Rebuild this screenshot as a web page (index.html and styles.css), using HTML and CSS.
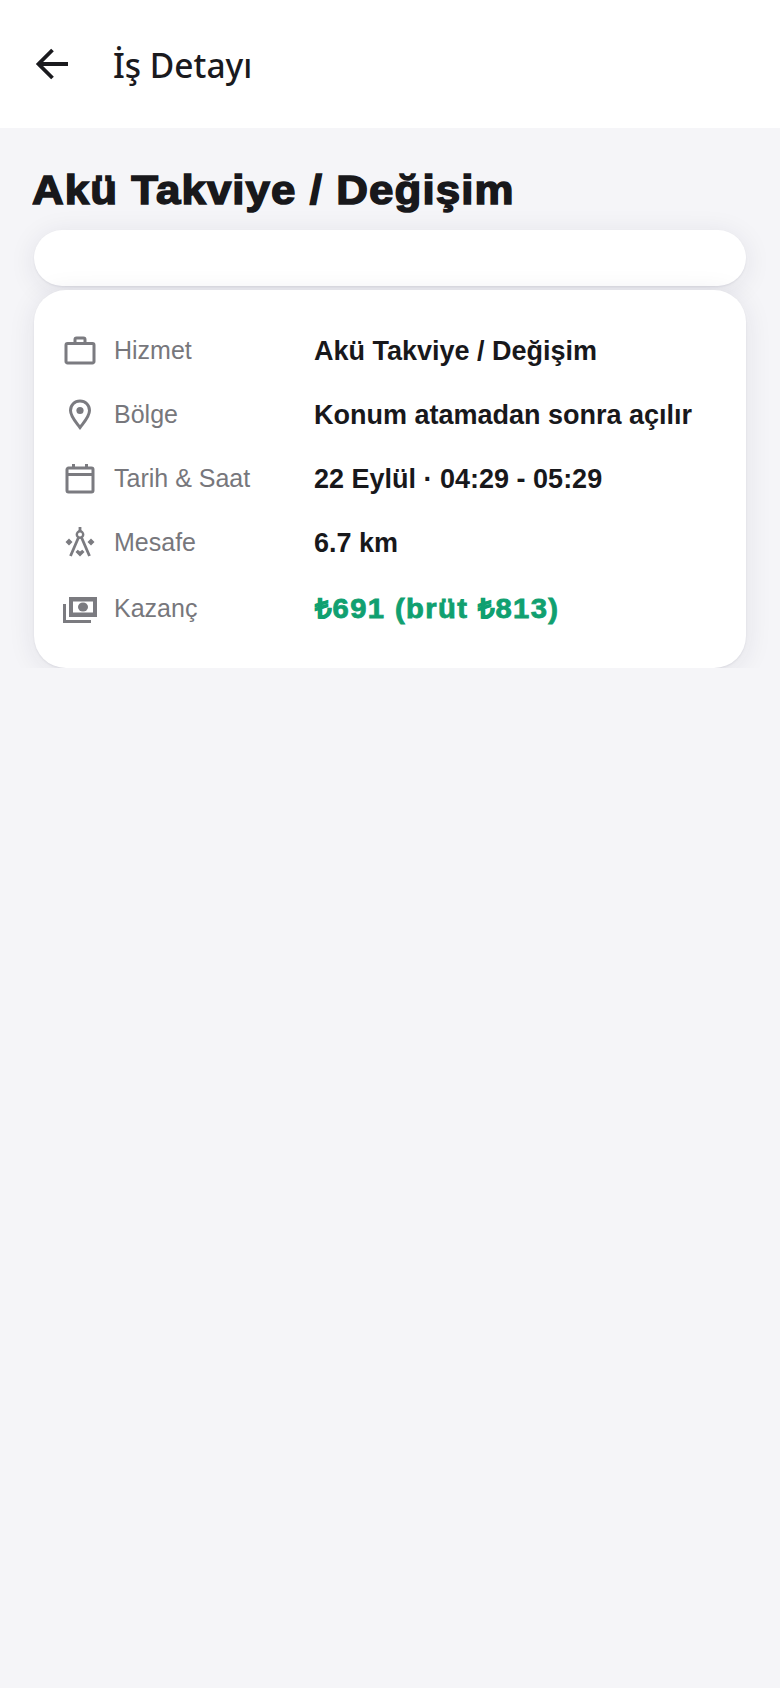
FILE: index.html
```html
<!DOCTYPE html>
<html>
<head>
    <meta charset="utf-8" />
    <title>İş Detayı</title>
    <link rel="stylesheet" href="styles.css">
</head>
<body>
    <header class="topbar">
        <svg class="back" width="36" height="32" viewBox="0 0 36 32"><path d="M33 16H3.500M17.500 2 3.500 16l14 14" fill="none" stroke="#1a1a1e" stroke-width="3.800"/></svg>
        <div class="topbar-title">İş Detayı</div>
    </header>

    <main class="content">
        <h1 class="job-title">Akü Takviye / Değişim</h1>
        <div class="card card-empty"></div>
        <div class="card card-info">
            <div class="row">
                <svg class="icon" viewBox="0 0 32 32"><path d="M3.500 8.500h25a1.500 1.500 0 0 1 1.500 1.500v16.500a1.500 1.500 0 0 1-1.500 1.500h-25A1.500 1.500 0 0 1 2 26.500V10a1.500 1.500 0 0 1 1.500-1.500ZM11 8.500V4.500A1.500 1.500 0 0 1 12.500 3h7A1.500 1.500 0 0 1 21 4.500v4" fill="none" stroke="#7b7b80" stroke-width="3"/></svg>
                <span class="label">Hizmet</span>
                <span class="value">Akü Takviye / Değişim</span>
            </div>
            <div class="row">
                <svg class="icon" viewBox="0 0 32 32"><path d="M16 2C10.500 2 6.500 6.200 6.500 11.500c0 6 5 11 9.500 17 4.500-6 9.500-11 9.500-17C25.500 6.200 21.500 2 16 2Z" fill="none" stroke="#7b7b80" stroke-width="3"/><circle cx="16" cy="11.500" r="3.600" fill="#7b7b80"/></svg>
                <span class="label">Bölge</span>
                <span class="value">Konum atamadan sonra açılır</span>
            </div>
            <div class="row">
                <svg class="icon" viewBox="0 0 32 32"><path d="M4.500 5h23A1.500 1.500 0 0 1 29 6.500v21a1.500 1.500 0 0 1-1.500 1.500h-23A1.500 1.500 0 0 1 3 27.500v-21A1.500 1.500 0 0 1 4.500 5ZM3 11.500h26M9.500 1v5M22.500 1v5" fill="none" stroke="#7b7b80" stroke-width="3"/></svg>
                <span class="label">Tarih &amp; Saat</span>
                <span class="value">22 Eylül · 04:29 - 05:29</span>
            </div>
            <div class="row">
                <svg class="icon" viewBox="0 0 32 32"><circle cx="16" cy="7.500" r="3.200" fill="none" stroke="#7b7b80" stroke-width="2.400"/><path d="M16 0v4.500M14.500 10.500 6.500 29M17.500 10.500 25.500 29" fill="none" stroke="#7b7b80" stroke-width="2.800"/><path d="M5 11.500 8.500 15 5 18.500 1.500 15ZM27 11.500 30.500 15 27 18.500 23.500 15ZM16 29.500l-4.500-4.500 2.200-2.200 2.300 1.700 2.300-1.700 2.200 2.200Z" fill="#7b7b80"/></svg>
                <span class="label">Mesafe</span>
                <span class="value">6.7 km</span>
            </div>
            <div class="row row-money">
                <svg class="icon icon-money" viewBox="0 0 34 28"><path d="M6 2h28v20H6Z" fill="#7b7b80"/><path d="M10 6.500h20v11H10Z" fill="#fff"/><ellipse cx="20" cy="12" rx="5" ry="4.500" fill="#7b7b80"/><path d="M1.500 9v17.500H28" fill="none" stroke="#7b7b80" stroke-width="3"/></svg>
                <span class="label">Kazanç</span>
                <span class="value value-money">₺691 (brüt ₺813)</span>
            </div>
        </div>
    </main>
</body>
</html>
```

FILE: styles.css
```css
body {
    margin: 0;
    background: #f5f5f8;
    color: #18181b;
    font-family: "Liberation Sans", Arial, sans-serif;
}

.topbar {
    height: 128px;
    background: #fff;
    display: flex;
    align-items: center;
    padding-left: 35px;
    gap: 42px;
}

.back {
    display: block;
}

.topbar-title {
    padding-top: 2px;
    font-family: "Noto Sans", sans-serif;
    font-size: 33.500px;
    font-weight: 500;
    color: #1a1a1e;
}

.content {
    padding: 0 34px;
}

.job-title {
    width: fit-content;
    margin: 0 0 0 -2px;
    padding-top: 39px;
    height: 63px;
    line-height: 46px;
    font-size: 41px;
    font-weight: 700;
    letter-spacing: 1px;
    -webkit-text-stroke: 1.500px #18181b;
    transform: scaleX(1.07);
    transform-origin: left;
}

.card {
    background: #fff;
    box-shadow: 0 4px 28px rgba(30, 30, 70, 0.09), 0 1px 2px rgba(30, 30, 70, 0.08);
}

.card-empty {
    height: 56px;
    border-radius: 28px;
    margin-bottom: 4px;
}

.card-info {
    height: 378px;
    box-sizing: border-box;
    border-radius: 32px;
    padding: 29px 30px 0 30px;
}

.row {
    height: 64px;
    display: flex;
    align-items: center;
}

.row-money {
    margin-top: 2px;
}

.icon {
    width: 32px;
    height: 32px;
    flex: none;
}

.icon-money {
    width: 34px;
    height: 28px;
    margin: 0 -1px;
}

.label {
    width: 200px;
    margin-left: 18px;
    margin-bottom: 2px;
    font-size: 25px;
    color: #77777c;
}

.value {
    font-size: 27px;
    font-weight: 700;
}

.value-money {
    margin-left: 1px;
    margin-bottom: 3px;
    color: #10a070;
    letter-spacing: 1.300px;
    -webkit-text-stroke: 0.800px #10a070;
    transform: scaleX(1.08);
    transform-origin: left;
}
```
